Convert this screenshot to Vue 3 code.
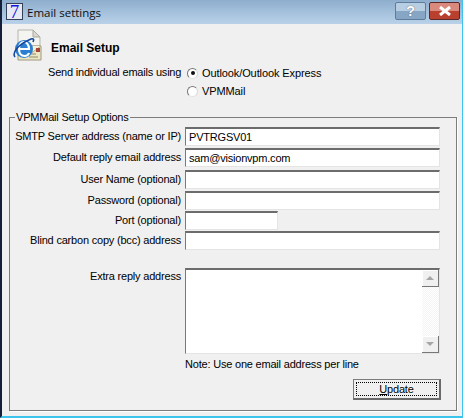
<template>
  <div class="window">
    <div class="titlebar">
      <div class="app-icon">7</div>
      <div class="title">Email settings</div>
      <div class="caption-btn help">?</div>
      <div class="caption-btn close">
        <svg width="14" height="10" viewBox="0 0 14 10">
          <path d="M2 1 L12 9 M12 1 L2 9" stroke="#fff" stroke-width="3" fill="none" />
        </svg>
      </div>
    </div>

    <div class="body">
      <div class="header">
        <svg class="mail-icon" width="32" height="34" viewBox="0 0 32 34">
          <path d="M6 1 H21 L28 8 V17 H6 Z" fill="#f4f4f0" stroke="#b5b5ad" />
          <path d="M21 1 V8 H28 Z" fill="#d8d8d0" stroke="#a8a8a0" />
          <path d="M6 17 H29 V31 H6 Z" fill="#ece6c4" stroke="#a09a80" />
          <path d="M6 17 L18 25 L29 17" fill="#f6f1d8" stroke="#b5ad88" />
          <rect x="24" y="19" width="4" height="4" fill="#a8433a" />
          <path d="M17 25 H24 M17 28 H26" stroke="#8d8a70" />
          <ellipse cx="12" cy="20" rx="9" ry="9" fill="#2c7fd0" />
          <path d="M7.5 20 H17 C17 15 14 13 12 13 C9 13 7 16 7 20 C7 24 9 27 12.5 27 C15 27 16.5 25.5 17 24" fill="none" stroke="#fff" stroke-width="2.2" />
          <path d="M3 28 C0 24 5 16 19 10 C22 9 22 11 21 13" fill="none" stroke="#16479c" stroke-width="1.6" />
        </svg>
        <h1>Email Setup</h1>
      </div>

      <div class="send-row">
        <span class="send-label">Send individual emails using</span>
        <div class="radios">
          <label class="radio-line"><span class="radio checked"></span>Outlook/Outlook Express</label>
          <label class="radio-line"><span class="radio"></span>VPMMail</label>
        </div>
      </div>

      <fieldset class="options">
        <legend>VPMMail Setup Options</legend>
        <div v-for="row in rows" :key="row.label" class="field" :style="{ height: row.h + 'px' }">
          <label>{{ row.label }}</label>
          <input class="text" :class="{ short: row.short }" :value="row.value" />
        </div>

        <div class="field extra">
          <label>Extra reply address</label>
          <div class="memo">
            <div class="memo-text"></div>
            <div class="scrollbar">
              <div class="sb-btn"><span class="arrow up"></span></div>
              <div class="sb-track"></div>
              <div class="sb-btn"><span class="arrow down"></span></div>
            </div>
          </div>
        </div>
        <div class="note">Note: Use one email address per line</div>
        <div class="actions">
          <button class="update"><span class="focus"><u>U</u>pdate</span></button>
        </div>
      </fieldset>
    </div>
  </div>
</template>

<script setup>
const rows = [
  { label: 'SMTP Server address (name or IP)', value: 'PVTRGSV01', h: 21 },
  { label: 'Default reply email address', value: 'sam@visionvpm.com', h: 22 },
  { label: 'User Name (optional)', value: '', h: 21 },
  { label: 'Password (optional)', value: '', h: 20 },
  { label: 'Port (optional)', value: '', h: 20, short: true },
  { label: 'Blind carbon copy (bcc) address', value: '', h: 20 }
]
</script>

<style scoped>
.window {
  width: 463px;
  height: 418px;
  box-sizing: border-box;
  display: flex;
  flex-direction: column;
  background: #f0f0f0;
  border-left: 2px solid #14203a;
  border-right: 1px solid #3cc4ee;
  border-bottom: 2px solid #3cc4ee;
  font-family: "Liberation Sans", Arial, sans-serif;
  font-size: 11px;
  letter-spacing: -0.2px;
  color: #000;
  overflow: hidden;
}

.titlebar {
  height: 24px;
  flex: none;
  display: flex;
  align-items: center;
  padding: 0 2px 0 4px;
  background: linear-gradient(#8eaecd, #b9d2e9);
}

.app-icon {
  width: 15px;
  height: 15px;
  margin-top: -1px;
  border: 1px solid #33405a;
  background: #e6e8f4;
  color: #1414e0;
  font-family: "Liberation Serif", serif;
  font-size: 19px;
  line-height: 16px;
  text-align: center;
}

.title {
  margin-left: 4px;
  flex: 1;
  font-family: "Open Sans", sans-serif;
  font-size: 11.5px;
  letter-spacing: 0;
  color: #101010;
}

.caption-btn {
  width: 29px;
  height: 16px;
  margin-top: -3px;
  border-radius: 2px;
  display: flex;
  align-items: center;
  justify-content: center;
}

.help {
  margin-right: 3px;
  border: 1px solid #5f7c9c;
  background: linear-gradient(#b7cde2 50%, #87a6c6 50%);
  color: #fff;
  font-size: 15px;
  font-weight: bold;
  text-shadow: 0 0 1px #333;
}

.close {
  border: 1px solid #5a2a2a;
  background: linear-gradient(#d98a7c 50%, #b9402e 50%);
}

.body {
  flex: 1;
  display: flex;
  flex-direction: column;
  padding: 0 5px 5px 7px;
  min-height: 0;
}

.header {
  height: 40px;
  display: flex;
  align-items: flex-start;
}

.mail-icon {
  margin: 5px 0 0 3px;
}

h1 {
  margin: 17px 0 0 7px;
  font-size: 12px;
  font-weight: bold;
  letter-spacing: 0;
}

.send-row {
  display: flex;
  height: 46px;
}

.send-label {
  margin: 2px 0 0 39px;
  width: 139px;
  white-space: nowrap;
}

.radio-line {
  display: flex;
  align-items: center;
  height: 18px;
  gap: 4px;
  letter-spacing: -0.1px;
}

.radio {
  width: 11px;
  height: 11px;
  box-sizing: border-box;
  border-radius: 50%;
  border: 1px solid;
  border-color: #777 #d8d8d8 #e4e4e4 #777;
  background: #fff;
  display: flex;
  align-items: center;
  justify-content: center;
}

.radio.checked::after {
  content: "";
  width: 4px;
  height: 4px;
  border-radius: 50%;
  background: #111;
}

.options {
  flex: 1;
  margin: 0;
  padding: 3px 16px 0 0;
  border: 1px solid #7c7c7c;
  box-shadow: 1px 1px 0 #fff;
  min-width: 0;
}

legend {
  padding: 0 1px;
  margin-left: 5px;
  line-height: 14px;
}

.field {
  display: flex;
  align-items: flex-start;
}

.field label {
  width: 171px;
  flex: none;
  padding-top: 3px;
  text-align: right;
  white-space: nowrap;
}

.text {
  flex: none;
  width: 255px;
  height: 19px;
  margin-left: 4px;
  padding: 0 3px;
  box-sizing: border-box;
  border-style: solid;
  border-width: 2px 1px 1px 1px;
  border-color: #6c6c6c #e4e4e4 #e4e4e4 #7a7a7a;
  background: #fff;
  font: inherit;
  letter-spacing: inherit;
  outline: none;
}

.text.short {
  width: 93px;
}

.extra {
  margin-top: 17px;
}

.extra label {
  padding-top: 2px;
}

.memo {
  width: 256px;
  height: 86px;
  margin-left: 4px;
  box-sizing: border-box;
  border-style: solid;
  border-width: 2px 1px 1px 1px;
  border-color: #6c6c6c #e4e4e4 #e4e4e4 #7a7a7a;
  background: #fff;
  display: flex;
}

.memo-text {
  flex: 1;
}

.scrollbar {
  width: 17px;
  display: flex;
  flex-direction: column;
  background: repeating-conic-gradient(#f4f4f4 0 25%, #fff 0 50%) 0 0 / 2px 2px;
}

.sb-btn {
  height: 17px;
  box-sizing: border-box;
  background: #f0f0f0;
  border-right: 1px solid #777;
  border-bottom: 1px solid #777;
  box-shadow: inset 1px 1px 0 #fff;
  display: flex;
  align-items: center;
  justify-content: center;
}

.sb-track {
  flex: 1;
}

.arrow {
  width: 0;
  height: 0;
  border-left: 4px solid transparent;
  border-right: 4px solid transparent;
}

.arrow.up {
  border-bottom: 4px solid #a6a6a6;
}

.arrow.down {
  border-top: 4px solid #a6a6a6;
}

.note {
  margin: 4px 0 0 175px;
}

.actions {
  display: flex;
  justify-content: flex-end;
  margin-top: 9px;
}

.update {
  width: 88px;
  height: 21px;
  margin-right: -1px;
  padding: 2px;
  box-sizing: border-box;
  background: #f0f0f0;
  border-style: solid;
  border-width: 1px 2px 2px 1px;
  border-color: #7c7c7c #6a6a6a #6a6a6a #7c7c7c;
  font: inherit;
  letter-spacing: inherit;
  color: #000;
}

.focus {
  display: block;
  height: 100%;
  line-height: 13px;
  border: 1px dotted #000;
  box-sizing: border-box;
}
</style>

<style>
body {
  margin: 0;
  background: #f0f0f0;
}
</style>
